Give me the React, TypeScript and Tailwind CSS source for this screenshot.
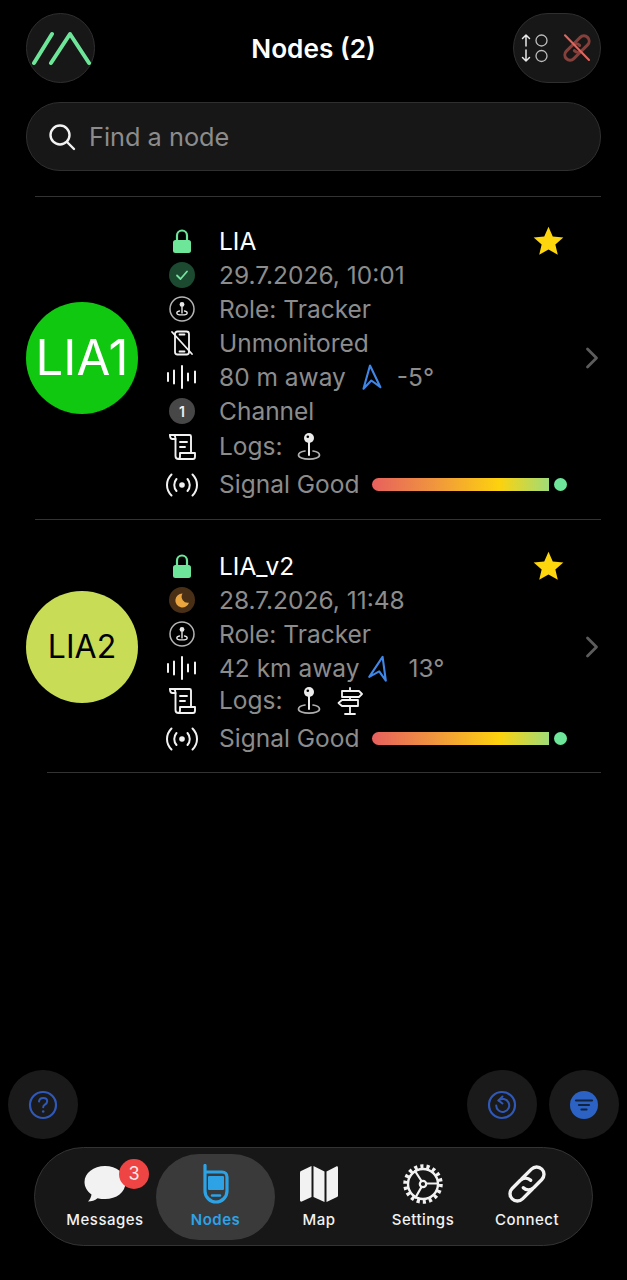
import React from "react";

const font = { fontFamily: "Inter, 'Liberation Sans', sans-serif" };

function LockIcon() {
  return (
    <svg width="20" height="26" viewBox="0 0 20 26" fill="none">
      <path d="M5 13V7.500a5 5 0 0 1 10 0V13" stroke="#6ee69a" strokeWidth="2.200" />
      <rect x="1" y="12" width="18" height="13" rx="2.500" fill="#6ee69a" />
    </svg>
  );
}

function CheckBadge() {
  return (
    <svg width="26" height="26" viewBox="0 0 26 26" fill="none">
      <circle cx="13" cy="13" r="13" fill="#1c4a30" />
      <path d="M8 13.500l3.500 3.500L18 9.500" stroke="#74e3a0" strokeWidth="1.800" strokeLinecap="round" strokeLinejoin="round" />
    </svg>
  );
}

function MoonBadge() {
  return (
    <svg width="26" height="26" viewBox="0 0 26 26" fill="none">
      <circle cx="13" cy="13" r="13" fill="#4a2f17" />
      <path d="M13.500 6.500a7 7 0 1 0 6.500 9.200 6.200 6.200 0 0 1-6.500-9.200z" fill="#eba63f" />
    </svg>
  );
}

function PinGlyph() {
  return (
    <svg width="26" height="30" viewBox="0 0 26 30" fill="none">
      <circle cx="13" cy="6" r="5" fill="#ececec" />
      <circle cx="11.800" cy="4.800" r="1.300" fill="#000" />
      <path d="M13 10v13" stroke="#ececec" strokeWidth="2" strokeLinecap="round" />
      <path d="M9 19c-3.800.7-6.500 2-6.500 4 0 2.500 4.600 4.200 10.500 4.200s10.500-1.700 10.500-4.200c0-2-2.700-3.300-6.500-4" stroke="#b0b0b0" strokeWidth="1.700" strokeLinecap="round" />
    </svg>
  );
}

function RoleIcon() {
  return (
    <svg width="26" height="26" viewBox="0 0 26 26" fill="none">
      <circle cx="13" cy="13" r="12" stroke="#b5b5b5" strokeWidth="1.500" />
      <circle cx="13" cy="8.500" r="2.400" fill="#e8e8e8" />
      <path d="M13 11v6" stroke="#e8e8e8" strokeWidth="1.400" strokeLinecap="round" />
      <path d="M10.500 15c-1.800.4-2.700 1-2.700 1.900 0 1.200 2.300 2 5.200 2s5.200-.8 5.200-2c0-.9-.9-1.500-2.700-1.900" stroke="#e8e8e8" strokeWidth="1.300" strokeLinecap="round" />
    </svg>
  );
}

function NoPhoneIcon() {
  return (
    <svg width="24" height="26" viewBox="0 0 24 26" fill="none" stroke="#f2f2f2" strokeWidth="1.800" strokeLinecap="round">
      <rect x="5" y="1.500" width="14" height="23" rx="2.500" />
      <path d="M9.500 4.500h5M9.500 21.500h5" />
      <path d="M2 2l20 22" />
    </svg>
  );
}

function WaveIcon() {
  return (
    <svg width="32" height="26" viewBox="0 0 32 26" fill="none" stroke="#f2f2f2" strokeWidth="2" strokeLinecap="round">
      <path d="M2 9v8M8 6.500v13M16 2v22M22 9.500v7M29 7.500v11" />
    </svg>
  );
}

function ChannelBadge({ n }: { n: number }) {
  return (
    <div className="flex h-[26px] w-[26px] items-center justify-center rounded-full bg-[#474747] text-[14px] font-semibold text-[#f0f0f0]">
      {n}
    </div>
  );
}

function ScrollIcon() {
  return (
    <svg width="28" height="28" viewBox="0 0 28 28" fill="none" stroke="#f2f2f2" strokeWidth="1.900" strokeLinecap="round" strokeLinejoin="round">
      <path d="M2 2h19.500a1.500 1.500 0 0 1 1.500 1.500V20" />
      <path d="M2 2c0 2 .6 4 2 4h3.500" />
      <path d="M6 2.200c1.200.6 1.500 2 1.500 3.800v17c0 2 1.200 3 3 3h14.500c1.300 0 2-1 2-2.600V20H12v3.500c0 1.600-.8 2.500-2 2.500" />
      <path d="M12 9h7M12 14h5" />
    </svg>
  );
}

function SignalIcon() {
  return (
    <svg width="34" height="26" viewBox="0 0 34 26" fill="none" stroke="#f2f2f2" strokeWidth="2" strokeLinecap="round">
      <circle cx="17" cy="13" r="2.800" fill="#f2f2f2" stroke="none" />
      <path d="M11.500 7c-3 3.500-3 8.500 0 12M22.500 7c3 3.500 3 8.500 0 12" />
      <path d="M6.500 2.500c-6 6-6 15 0 21M27.500 2.500c6 6 6 15 0 21" />
    </svg>
  );
}

function SignpostIcon() {
  return (
    <svg width="26" height="28" viewBox="0 0 26 28" fill="none" stroke="#f2f2f2" strokeWidth="1.800" strokeLinejoin="round" strokeLinecap="round">
      <path d="M13 1v3M13 10v3M13 19v8M8 27h10" />
      <path d="M5 4h17l3 3-3 3H5z" />
      <path d="M21 13H5l-3.500 3L5 19h16z" />
    </svg>
  );
}

function NavArrow({ rotate }: { rotate: number }) {
  return (
    <svg width="20" height="26" viewBox="0 0 20 26" fill="none" style={{ transform: `rotate(${rotate}deg)` }}>
      <path d="M10 1.500L18.500 24 10 16.500 1.500 24z" stroke="#3f86e6" strokeWidth="2.100" strokeLinejoin="round" />
    </svg>
  );
}

function Star() {
  return (
    <svg width="31" height="30" viewBox="0 0 24 23" fill="#fdd60e">
      <path d="M12 .5l3.300 7.500 8.200.8-6.200 5.400 1.900 8-7.200-4.200-7.200 4.200 1.900-8L.5 8.800l8.200-.8z" />
    </svg>
  );
}

function Chevron() {
  return (
    <svg width="14" height="22" viewBox="0 0 14 22" fill="none" stroke="#5c5c5c" strokeWidth="2.800" strokeLinecap="round" strokeLinejoin="round">
      <path d="M2.500 2l9 9-9 9" />
    </svg>
  );
}

function SignalBar() {
  return (
    <div className="flex flex-1 items-center">
      <div className="ml-[13px] h-[13px] w-[177px] rounded-l-full bg-[linear-gradient(90deg,#e7605e_0%,#f0953e_35%,#fdd20e_72%,#9fdc78_100%)]" />
      <div className="ml-[5px] h-[13px] w-[13px] rounded-full bg-[#6ee69a]" />
    </div>
  );
}

function Line({ icon, className, children }: { icon: React.ReactNode; className: string; children: React.ReactNode }) {
  return (
    <div className={`flex items-center ${className}`}>
      <div className="flex w-[36px] shrink-0 items-center justify-center">{icon}</div>
      <div className="ml-[19px] flex min-w-0 flex-1 items-center whitespace-nowrap text-[24.500px] leading-none text-[#8c8c8c]">{children}</div>
    </div>
  );
}

function Avatar({ label, className }: { label: string; className: string }) {
  return (
    <div className={`flex h-[112px] w-[112px] shrink-0 items-center justify-center rounded-full ${className}`}>
      {label}
    </div>
  );
}

function Divider({ className }: { className: string }) {
  return <div className={`h-px bg-[#333333] mr-[26px] ${className}`} />;
}

function NodeOne() {
  return (
    <div className="flex items-center pl-[26px] pr-[26px]">
      <Avatar label="LIA1" className="bg-[#10c810] text-[49px] text-white" />
      <div className="ml-[26px] w-[403px] pt-[27px] pb-[15px]">
        <Line icon={<LockIcon />} className="h-[34px]">
          <span className="flex-1 text-white">LIA</span>
          <span className="mr-[3px]"><Star /></span>
        </Line>
        <Line icon={<CheckBadge />} className="h-[34px]">29.7.2026, 10:01</Line>
        <Line icon={<RoleIcon />} className="h-[34px]">Role: Tracker</Line>
        <Line icon={<NoPhoneIcon />} className="h-[34px]">Unmonitored</Line>
        <Line icon={<WaveIcon />} className="h-[34px]">
          80 m away
          <span className="ml-[15px]"><NavArrow rotate={-5} /></span>
          <span className="ml-[16px]">-5°</span>
        </Line>
        <Line icon={<ChannelBadge n={1} />} className="h-[34px]">Channel</Line>
        <Line icon={<ScrollIcon />} className="h-[37px]">
          Logs:
          <span className="ml-[13px]"><PinGlyph /></span>
        </Line>
        <Line icon={<SignalIcon />} className="h-[39px]">
          Signal Good
          <SignalBar />
        </Line>
      </div>
      <div className="ml-[18px]"><Chevron /></div>
    </div>
  );
}

function NodeTwo() {
  return (
    <div className="flex items-center pl-[26px] pr-[26px]">
      <Avatar label="LIA2" className="mt-[2px] bg-[#c9dc56] text-[32px] text-black" />
      <div className="ml-[26px] w-[403px] pt-[29px] pb-[11px]">
        <Line icon={<LockIcon />} className="h-[34px]">
          <span className="flex-1 text-white">LIA_v2</span>
          <span className="mr-[3px]"><Star /></span>
        </Line>
        <Line icon={<MoonBadge />} className="h-[34px]">28.7.2026, 11:48</Line>
        <Line icon={<RoleIcon />} className="h-[34px]">Role: Tracker</Line>
        <Line icon={<WaveIcon />} className="h-[34px]">
          42 km away
          <span className="ml-[11px]"><NavArrow rotate={13} /></span>
          <span className="ml-[18px]">13°</span>
        </Line>
        <Line icon={<ScrollIcon />} className="h-[31px]">
          Logs:
          <span className="ml-[13px]"><PinGlyph /></span>
          <span className="ml-[15px]"><SignpostIcon /></span>
        </Line>
        <Line icon={<SignalIcon />} className="h-[45px]">
          Signal Good
          <SignalBar />
        </Line>
      </div>
      <div className="ml-[18px] mt-[2px]"><Chevron /></div>
    </div>
  );
}

function Header() {
  return (
    <div className="flex items-center justify-between pl-[26px] pr-[26px] pt-[13px]">
      <div className="flex h-[70px] w-[69px] items-center justify-center rounded-full border border-[#2f2f2f] bg-[#171717]">
        <svg width="60" height="36" viewBox="0 0 60 36" fill="none" stroke="#6ee69a" strokeWidth="4" strokeLinecap="round" strokeLinejoin="round">
          <path d="M3 33L21 4M20 33L39 4l19 29" />
        </svg>
      </div>
      <div className="ml-[19px] mt-[2px] text-[26.200px] font-semibold text-white">Nodes (2)</div>
      <div className="flex h-[70px] w-[88px] items-center rounded-full border border-[#2f2f2f] bg-[#171717] pl-[7px]">
        <svg width="28" height="32" viewBox="0 0 28 32" fill="none">
          <g stroke="#e8e8e8" strokeWidth="1.500" strokeLinecap="round" strokeLinejoin="round">
            <path d="M5 14V3M1.500 6.500L5 3l3.500 3.500M5 18v11M1.500 25.500L5 29l3.500-3.500" />
          </g>
          <circle cx="20.500" cy="8.500" r="5.500" stroke="#bcbcbc" strokeWidth="1.300" />
          <circle cx="20.500" cy="24" r="5.500" stroke="#bcbcbc" strokeWidth="1.300" />
        </svg>
        <svg className="ml-[13px]" width="30" height="30" viewBox="0 0 40 40" fill="none" strokeLinecap="round">
          <g stroke="#85403c" strokeWidth="4" transform="rotate(-45 20 20)">
            <path d="M20 27H7a7 7 0 0 1 0-14h11a7 7 0 0 1 7 7" />
            <path d="M20 13h13a7 7 0 0 1 0 14H22a7 7 0 0 1-7-7" />
          </g>
          <path d="M4 3l32 33" stroke="#e0665f" strokeWidth="2.800" />
        </svg>
      </div>
    </div>
  );
}

function SearchBar() {
  return (
    <div className="mx-[26px] mt-[19px] flex h-[69px] items-center rounded-[34px] border border-[#2f2f2f] bg-[#171717] pl-[21px]">
      <svg width="28" height="28" viewBox="0 0 28 28" fill="none" stroke="#f2f2f2" strokeWidth="2.400" strokeLinecap="round">
        <circle cx="12" cy="12" r="9.500" />
        <path d="M19 19l7 7" />
      </svg>
      <span className="ml-[13px] text-[25.300px] text-[#8c8c8c]">Find a node</span>
    </div>
  );
}

function RoundButton({ children }: { children: React.ReactNode }) {
  return <div className="flex h-[69px] w-[70px] items-center justify-center rounded-full bg-[#1a1a1a]">{children}</div>;
}

function ActionRow() {
  return (
    <div className="mt-auto flex items-center pl-[8px] pr-[8px]">
      <RoundButton>
        <svg width="30" height="30" viewBox="0 0 30 30" fill="none">
          <circle cx="15" cy="15" r="13" stroke="#2f58b8" strokeWidth="2.200" />
          <path d="M11 11.500c.3-2.300 2-3.500 4.200-3.500 2.300 0 4 1.300 4 3.300 0 1.700-1 2.500-2.300 3.300-1.100.7-1.700 1.200-1.700 2.700" stroke="#2f58b8" strokeWidth="2" strokeLinecap="round" />
          <circle cx="15.200" cy="21.500" r="1.300" fill="#2f58b8" />
        </svg>
      </RoundButton>
      <div className="flex-1" />
      <RoundButton>
        <svg width="30" height="30" viewBox="0 0 30 30" fill="none" stroke="#2f58b8" strokeWidth="2.200" strokeLinecap="round" strokeLinejoin="round">
          <circle cx="15" cy="15" r="13" />
          <path d="M11.500 10.500a6.500 6.500 0 1 1-2.300 5" strokeWidth="2" />
          <path d="M15.500 6.500l-4 4 4 3" strokeWidth="2" />
        </svg>
      </RoundButton>
      <div className="w-[12px]" />
      <RoundButton>
        <svg width="30" height="30" viewBox="0 0 30 30" fill="none">
          <circle cx="15" cy="15" r="14" fill="#2b62c4" />
          <path d="M7 10.500h16M10 15h10M12.500 19.500h5" stroke="#12233f" strokeWidth="2.200" strokeLinecap="round" />
        </svg>
      </RoundButton>
    </div>
  );
}

function Tab({ className, label, labelClass, children }: { className: string; label: string; labelClass: string; children: React.ReactNode }) {
  return (
    <div className={`flex h-[86px] flex-col items-center justify-start ${className}`}>
      <div className="relative flex h-[52px] items-center justify-center pt-[8px]">{children}</div>
      <div className={`mt-[4px] text-[15px] font-medium leading-[20px] tracking-[0.500px] ${labelClass}`}>{label}</div>
    </div>
  );
}

function TabBar() {
  return (
    <div className="mx-[34px] mb-[34px] mt-[8px] flex h-[99px] items-center rounded-[50px] border border-[#333333] bg-[#171717] pl-[19px]">
      <Tab className="w-[102px]" label="Messages" labelClass="text-[#f2f2f2]">
        <svg width="44" height="38" viewBox="0 0 44 38" fill="#f2f2f2">
          <path d="M22 1C10.500 1 1.500 8 1.500 17c0 5 2.800 9.500 7 12.500-.3 2.500-1.500 5-3.500 7 3.500 0 7-1.200 9.500-3.300 2.500.6 5 .9 7.500.9 11.500 0 20.500-7 20.500-16.600S33.500 1 22 1z" />
        </svg>
        <div className="absolute left-[36px] top-[5px] flex h-[30px] w-[30px] items-center justify-center rounded-full bg-[#ef4444] text-[18px] text-[#f7e9e9]">3</div>
      </Tab>
      <Tab className="w-[119px] rounded-[43px] bg-[#3a3a3a]" label="Nodes" labelClass="font-semibold text-[#2da3e6]">
        <svg width="28" height="40" viewBox="0 0 28 40" fill="none">
          <path d="M3 1.500V27c0 6 5 11 11 11s11-5 11-11V13c0-3-2-5-5-5H3" stroke="#2da3e6" strokeWidth="3.200" strokeLinecap="round" strokeLinejoin="round" />
          <rect x="6" y="12" width="16" height="14" rx="1" fill="#2da3e6" />
          <path d="M10 31.500h8" stroke="#2da3e6" strokeWidth="2.400" strokeLinecap="round" />
        </svg>
      </Tab>
      <Tab className="w-[88px]" label="Map" labelClass="text-[#f2f2f2]">
        <svg width="38" height="36" viewBox="0 0 38 36" fill="#f2f2f2">
          <path d="M0 6.500c0-.8.400-1.300 1-1.600L11.500 0v31L1.800 35.500c-.9.400-1.800-.2-1.800-1.200z" />
          <path d="M13.500 0l11 5.500V36l-11-5z" />
          <path d="M26.500 5.500L36.200.5c.9-.4 1.800.2 1.800 1.200v27.800c0 .8-.4 1.300-1 1.600L26.500 36z" />
        </svg>
      </Tab>
      <Tab className="w-[120px]" label="Settings" labelClass="text-[#f2f2f2]">
        <svg width="40" height="40" viewBox="0 0 40 40" fill="none" stroke="#f2f2f2">
          <circle cx="20" cy="20" r="17.500" strokeWidth="4.500" strokeDasharray="3.100 3" />
          <circle cx="20" cy="20" r="15" strokeWidth="2.400" />
          <circle cx="20" cy="20" r="3.200" strokeWidth="2.200" />
          <path d="M23 19.500h12M18.500 23L12.500 33.500M18.500 17L12 7" strokeWidth="2.200" strokeLinecap="round" />
        </svg>
      </Tab>
      <Tab className="w-[88px]" label="Connect" labelClass="text-[#f2f2f2]">
        <svg width="42" height="42" viewBox="0 0 40 40" fill="none" stroke="#f2f2f2" strokeWidth="3.200" strokeLinecap="round">
          <g transform="rotate(-45 20 20)">
            <path d="M20 27H7a7 7 0 0 1 0-14h11a7 7 0 0 1 7 7" />
            <path d="M20 13h13a7 7 0 0 1 0 14H22a7 7 0 0 1-7-7" />
          </g>
        </svg>
      </Tab>
    </div>
  );
}

export default function App() {
  return (
    <div style={font} className="flex h-[1280px] w-[627px] flex-col overflow-hidden bg-black">
      <Header />
      <SearchBar />
      <div className="mt-[25px]">
        <Divider className="ml-[35px]" />
        <NodeOne />
        <Divider className="ml-[35px]" />
        <NodeTwo />
        <Divider className="ml-[47px]" />
      </div>
      <ActionRow />
      <TabBar />
    </div>
  );
}
